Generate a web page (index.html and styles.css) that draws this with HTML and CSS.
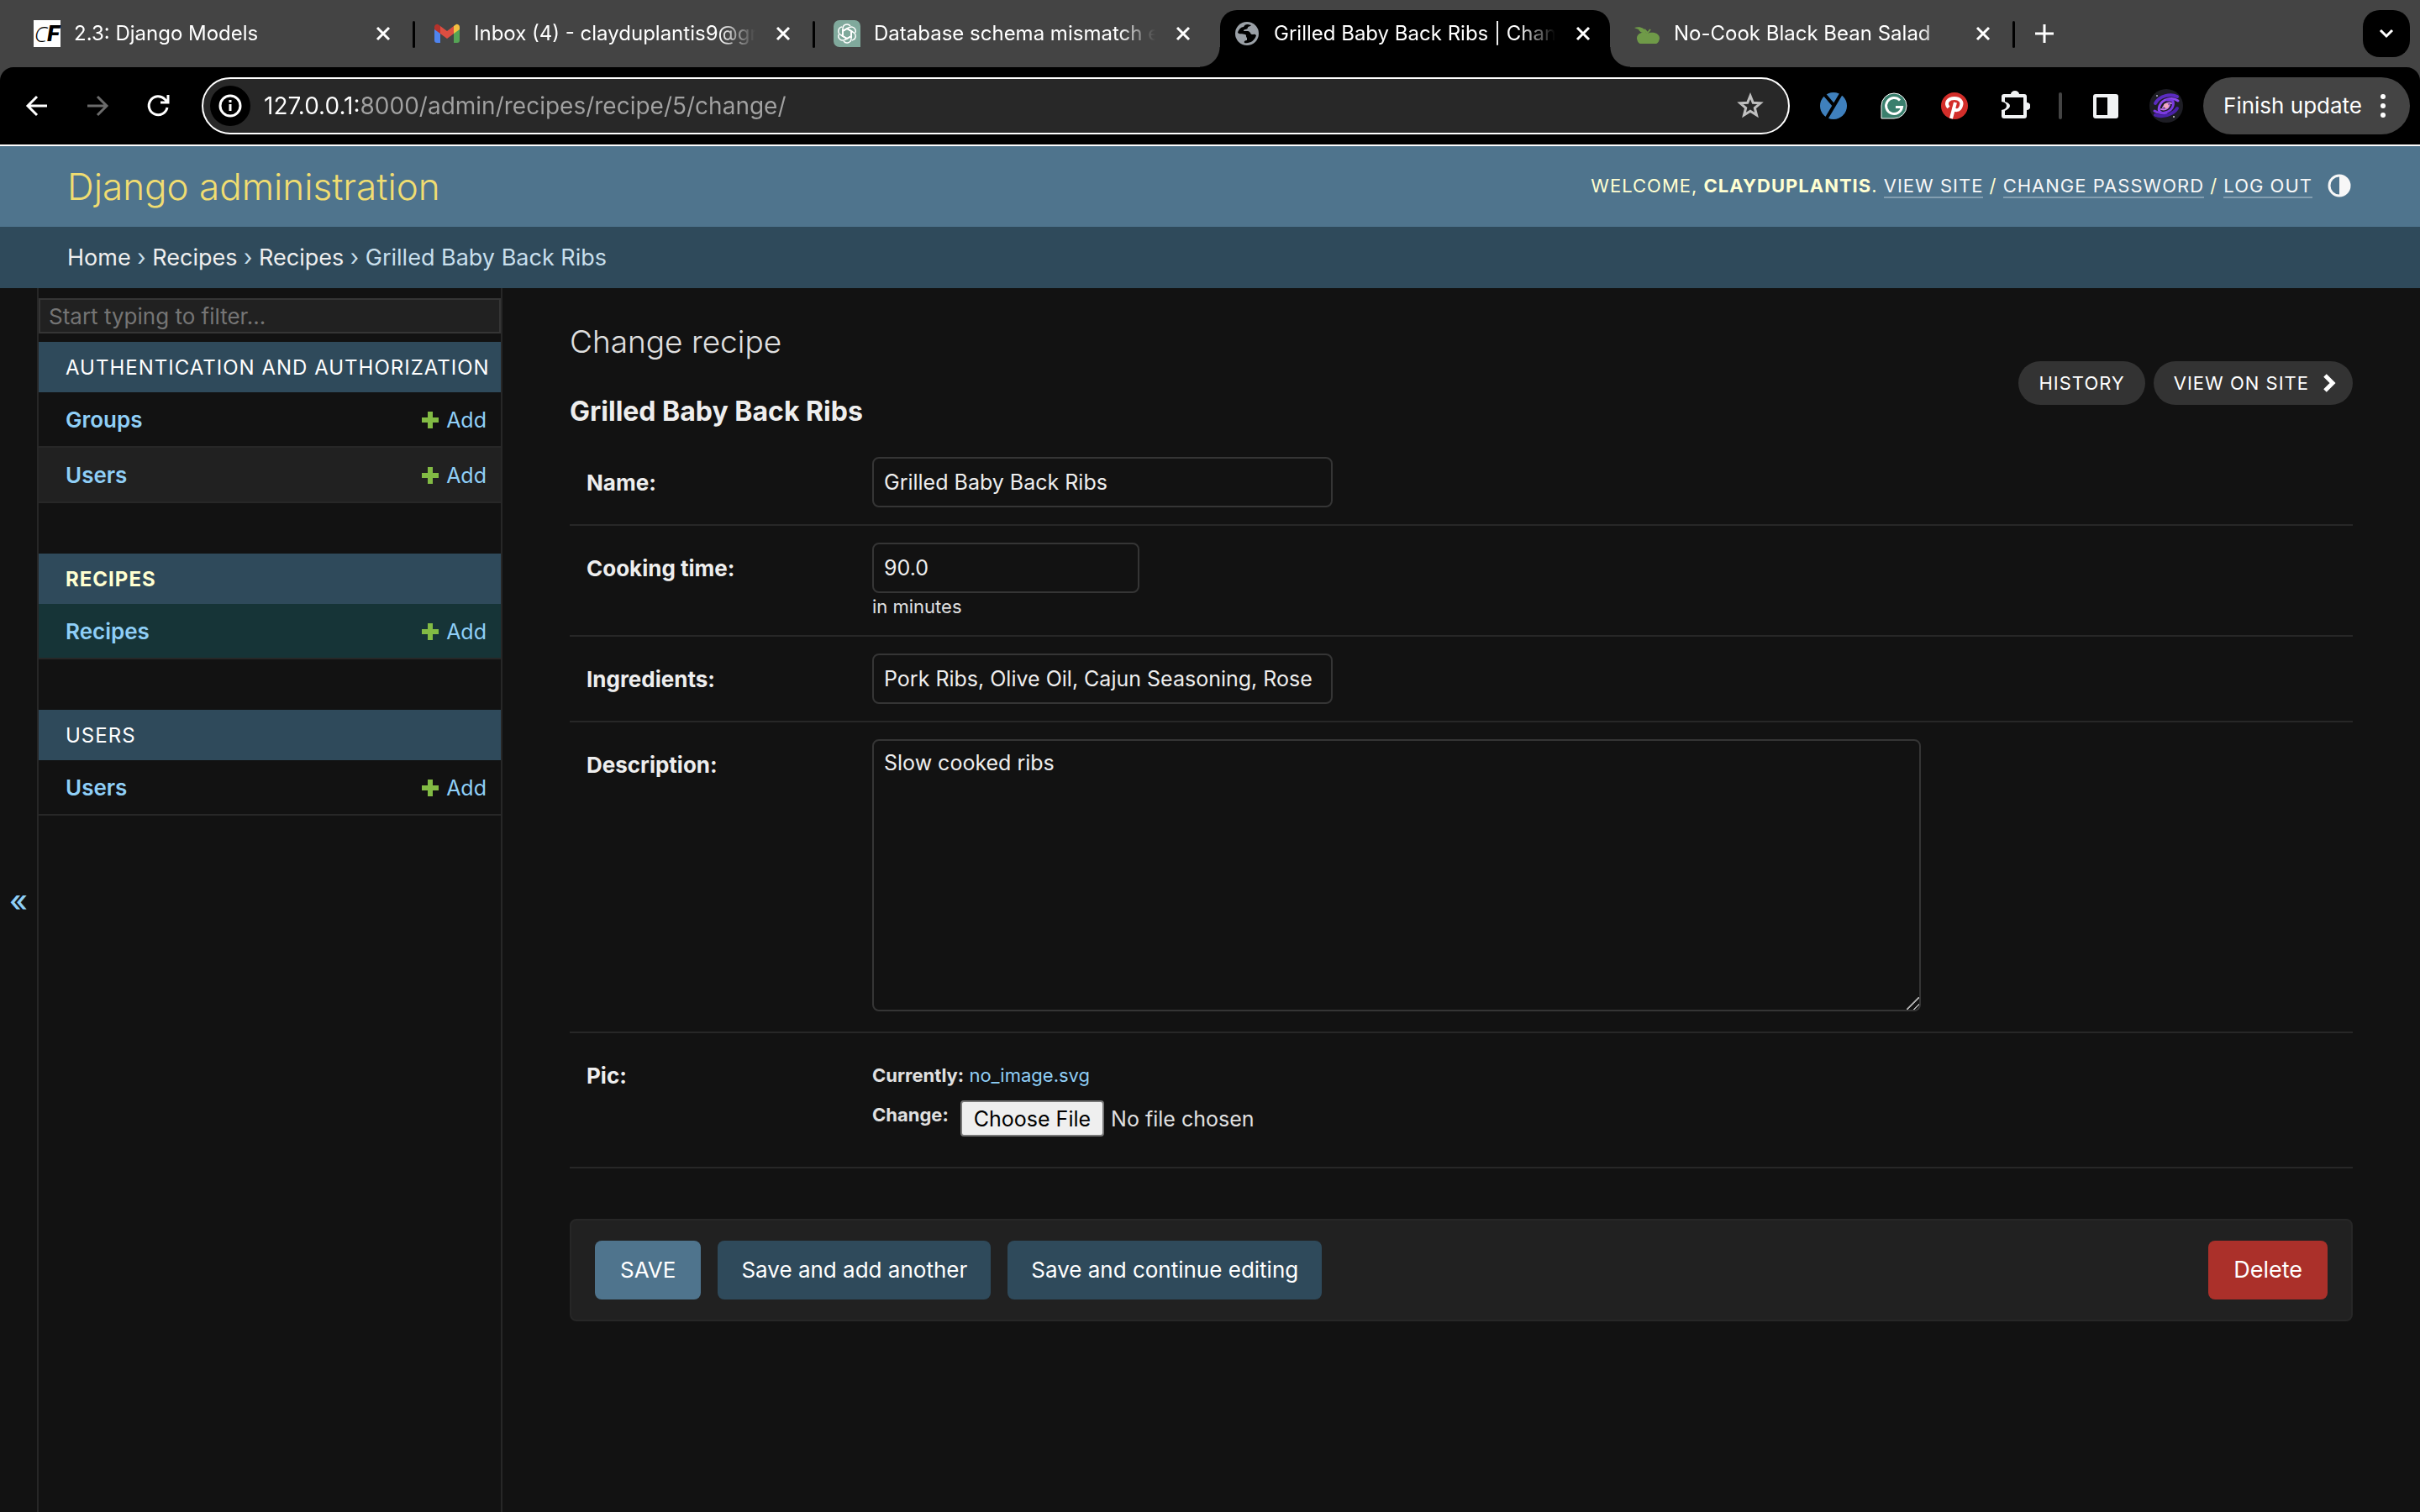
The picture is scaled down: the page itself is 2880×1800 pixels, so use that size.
FILE: index.html
```
<!DOCTYPE html>
<html lang="en">
<head>
<meta charset="utf-8">
<meta name="viewport" content="width=device-width, initial-scale=1">
<title>Grilled Baby Back Ribs | Change recipe | Django site admin</title>
<link rel="stylesheet" href="styles.css">
</head>
<body>
<svg class="sprite" aria-hidden="true">
  <symbol id="close" viewBox="0 0 18 18"><path d="M2 2l14 14M16 2L2 16" fill="none" stroke="#fff" stroke-width="3"/></symbol>
  <symbol id="plus" viewBox="0 0 22 22"><path d="M11 1v20M1 11h20" fill="none" stroke="#82bb44" stroke-width="6"/></symbol>
</svg>

<div class="browser">
  <div class="tabs">
    <div class="tab">
      <span class="favicon favicon-cf"><i>C</i><b>F</b></span>
      <span class="tab-title">2.3: Django Models</span>
      <button class="tab-close" aria-label="Close tab"><svg><use href="#close"/></svg></button>
    </div>
    <div class="tab">
      <svg class="favicon" viewBox="0 0 32 32"><path d="M1 8v16a3 3 0 0 0 3 3h4V13z" fill="#4f84ee"/><path d="M31 8v16a3 3 0 0 1-3 3h-4V13z" fill="#55a455"/><path d="M24 7l2-1.500a3.100 3.100 0 0 1 5 2.500v3l-7 5z" fill="#f3bf41"/><path d="M8 7L6 5.500A3.100 3.100 0 0 0 1 8v3l7 5z" fill="#b4322b"/><path d="M8 7l8 6 8-6v9l-8 6-8-6z" fill="#dc4e41"/></svg>
      <span class="tab-title">Inbox (4) - clayduplantis9@gr</span>
      <button class="tab-close" aria-label="Close tab"><svg><use href="#close"/></svg></button>
    </div>
    <div class="tab tab-before-active">
      <svg class="favicon" viewBox="0 0 32 32"><path d="M7 0h18a7 7 0 0 1 7 7v25H7a7 7 0 0 1-7-7V7a7 7 0 0 1 7-7z" fill="#80a99c"/>
        <g fill="none" stroke="#fff" stroke-width="1.500" stroke-linejoin="round">
          <path id="petal" d="M11 19V10a5 5 0 0 1 9-3M11 13l5-3 7 4"/>
          <use href="#petal" transform="rotate(60 16 16)"/><use href="#petal" transform="rotate(120 16 16)"/><use href="#petal" transform="rotate(180 16 16)"/><use href="#petal" transform="rotate(240 16 16)"/><use href="#petal" transform="rotate(300 16 16)"/>
        </g></svg>
      <span class="tab-title">Database schema mismatch e</span>
      <button class="tab-close" aria-label="Close tab"><svg><use href="#close"/></svg></button>
    </div>
    <div class="tab tab-active">
      <svg class="favicon" viewBox="0 0 32 32"><circle cx="16" cy="16" r="14" fill="#9aa0a6"/><path d="M17 5c-3 0-4 1-5 3-3 0-6 3-7 7 2 2 5 1 9 2 2 1 0 3 2 4v3c-2 0-4 1-3 3 6 1 12-2 14-9-2-2-3-1-5-1s-2-4-5-4h-5c0-3 4-1 5-4 0-2 3-1 4-3z" fill="#000"/></svg>
      <span class="tab-title">Grilled Baby Back Ribs | Chan</span>
      <button class="tab-close" aria-label="Close tab"><svg><use href="#close"/></svg></button>
    </div>
    <div class="tab">
      <svg class="favicon" viewBox="0 0 32 32"><path d="M17 16c3-2 13-2 14 5 0 3-2 7-4 7H8c-2 0-4-4-4-7 1-7 10-7 13-5z" fill="#6f9a48"/><path d="M1 9c6-2 13 0 14 6-6 1-8-2-9-4-2-1-4-1-5-2z" fill="#6f9a48"/><path d="M17 16c-1-2-2-3-4-5M17 15l3-4" fill="none" stroke="#6f9a48" stroke-width="2"/></svg>
      <span class="tab-title">No-Cook Black Bean Salad</span>
      <button class="tab-close" aria-label="Close tab"><svg><use href="#close"/></svg></button>
    </div>
    <button class="new-tab" aria-label="New tab"><svg viewBox="0 0 22 22"><path d="M11 0v22M0 11h22" stroke="#fff" stroke-width="3"/></svg></button>
    <button class="tab-search" aria-label="Search tabs"><svg viewBox="0 0 18 12"><path d="M2 2l7 7 7-7" fill="none" stroke="#fff" stroke-width="3"/></svg></button>
  </div>

  <div class="toolbar">
    <button class="tool" aria-label="Back"><svg viewBox="0 0 32 32"><path d="M28 16H6M16 5L5 16l11 11" fill="none" stroke="#fff" stroke-width="3"/></svg></button>
    <button class="tool" aria-label="Forward"><svg viewBox="0 0 32 32"><path d="M4 16h22M16 5l11 11-11 11" fill="none" stroke="#6b6b6b" stroke-width="3"/></svg></button>
    <button class="tool" aria-label="Reload"><svg viewBox="0 0 32 32"><path d="M27 18a11 11 0 1 1-3-10l3 3M28 3v9h-9" fill="none" stroke="#fff" stroke-width="3"/></svg></button>
    <div class="omnibox">
      <button class="site-info" aria-label="Site information"><svg viewBox="0 0 28 28"><circle cx="14" cy="14" r="12" fill="none" stroke="#fff" stroke-width="3"/><path d="M14 12v8M14 7v3" stroke="#fff" stroke-width="3"/></svg></button>
      <input class="url" type="text" aria-label="Address" value="127.0.0.1:8000/admin/recipes/recipe/5/change/">
      <button class="star" aria-label="Bookmark"><svg viewBox="0 0 34 34"><path d="M17 5l3.300 8.200 8.700.6-6.700 5.700 2.200 8.500-7.500-4.700L9.500 28l2.200-8.500L5 13.800l8.700-.6z" fill="none" stroke="#c0c0c0" stroke-width="3"/></svg></button>
    </div>
    <div class="extensions">
      <button class="tool" aria-label="Extension"><svg viewBox="0 0 32 32"><circle cx="16" cy="16" r="16" fill="#3f80bd"/><path d="M4 1l12 14M26 0L7 32" stroke="#000" stroke-width="4"/></svg></button>
      <button class="tool" aria-label="Grammarly"><svg viewBox="0 0 32 32"><path d="M16 1a15 15 0 0 1 0 30H1V16A15 15 0 0 1 16 1z" fill="#3a7f6d" stroke="#fff" stroke-width="1"/><path d="M23 9.500A9.500 9.500 0 1 0 25.500 17.500H18" fill="none" stroke="#fff" stroke-width="3"/></svg></button>
      <button class="tool" aria-label="Pinterest"><svg viewBox="0 0 32 32"><circle cx="16" cy="16" r="16" fill="#d32e2a"/><path d="M9 18c-5-6 0-11 7-11 6 0 10 4 8 9-2 7-9 6-9 2M17 12l-5 19" fill="none" stroke="#fff" stroke-width="4"/></svg></button>
      <button class="tool" aria-label="Extensions"><svg class="puzzle" viewBox="0 0 36 36"><path d="M2 4h11a5 4 0 0 1 10 0h6q3 0 3 3v7a4 4 0 0 1 0 9v7q0 3-3 3H5q-3 0-3-3v-7q6-1 6-5t-6-5V7q0-3 3-3zM6 8v5q6 2 6 5t-6 6v5h22V8z" fill="#f1f3f4" fill-rule="evenodd"/></svg></button>
      <span class="divider"></span>
      <button class="tool" aria-label="Side panel"><svg viewBox="0 0 32 32"><path d="M4 2h24q3 0 3 3v23q0 3-3 3H4q-3 0-3-3V5q0-3 3-3zM5 6v21h13V6z" fill="#f1f3f4" fill-rule="evenodd"/></svg></button>
      <button class="tool" aria-label="Profile"><svg class="avatar" viewBox="0 0 40 40"><circle cx="20" cy="20" r="20" fill="#1d1d24"/><g fill="none" stroke-linecap="round"><path d="M33 9C25 5 12 8 7 17" stroke="#5a2bc0" stroke-width="4"/><path d="M34 14C27 9 15 12 12 20s3 9 8 9" stroke="#8d49f0" stroke-width="3"/><path d="M7 31c8 3 21 0 26-8" stroke="#4a21a8" stroke-width="4"/><path d="M6 26c7 5 20 2 22-6s-3-7-7-7" stroke="#7a3ae0" stroke-width="3"/><path d="M16 22c2-5 7-6 10-5M24 19c-2 5-6 6-10 5" stroke="#c078ee" stroke-width="2"/></g><circle cx="20" cy="20" r="3" fill="#f2a7c0"/><circle cx="9" cy="8" r="1" fill="#b9b9d0"/><circle cx="29" cy="33" r="1" fill="#d9d9d9"/></svg></button>
    </div>
    <button class="update">Finish update<svg viewBox="0 0 6 28"><circle cx="3" cy="3" r="3" fill="#fff"/><circle cx="3" cy="14" r="3" fill="#fff"/><circle cx="3" cy="25" r="3" fill="#fff"/></svg></button>
  </div>
</div>

<header class="header">
  <a class="site-name" href="#">Django administration</a>
  <div class="user-tools">
    <span>Welcome, <strong>clayduplantis</strong>. <a href="#">View site</a> / <a href="#">Change password</a> / <a href="#">Log out</a></span>
    <button class="theme" aria-label="Toggle theme"><svg viewBox="0 0 28 28"><circle cx="14" cy="14" r="12" fill="none" stroke="#f7f7f7" stroke-width="3"/><path d="M14 2a12 12 0 0 1 0 24z" fill="#f7f7f7"/></svg></button>
  </div>
</header>

<nav class="breadcrumbs" aria-label="Breadcrumbs"><a href="#">Home</a> › <a href="#">Recipes</a> › <a href="#">Recipes</a> › Grilled Baby Back Ribs</nav>

<div class="main">
  <button class="toggle" aria-label="Toggle navigation">«</button>
  <nav class="sidebar" aria-label="Sidebar">
    <input class="filter" type="search" placeholder="Start typing to filter..." aria-label="Filter navigation items">
    <section class="module">
      <h2><a href="#">Authentication and Authorization</a></h2>
      <div class="model"><a class="model-name" href="#">Groups</a><a class="add" href="#"><svg><use href="#plus"/></svg>Add</a></div>
      <div class="model model-alt"><a class="model-name" href="#">Users</a><a class="add" href="#"><svg><use href="#plus"/></svg>Add</a></div>
    </section>
    <section class="module module-current">
      <h2><a href="#">Recipes</a></h2>
      <div class="model model-current"><a class="model-name" href="#">Recipes</a><a class="add" href="#"><svg><use href="#plus"/></svg>Add</a></div>
    </section>
    <section class="module">
      <h2><a href="#">Users</a></h2>
      <div class="model"><a class="model-name" href="#">Users</a><a class="add" href="#"><svg><use href="#plus"/></svg>Add</a></div>
    </section>
  </nav>

  <main class="content">
    <div class="heading">
      <div>
        <h1>Change recipe</h1>
        <h2>Grilled Baby Back Ribs</h2>
      </div>
      <div class="object-tools">
        <a href="#">History</a>
        <a href="#">View on site<svg viewBox="0 0 16 24"><path d="M3 3l9 9-9 9" fill="none" stroke="#fff" stroke-width="5"/></svg></a>
      </div>
    </div>
    <form onsubmit="return false">
      <div class="row"><label for="name">Name:</label><div><input class="field" id="name" type="text" value="Grilled Baby Back Ribs"></div></div>
      <div class="row"><label for="time">Cooking time:</label><div><input class="field field-number" id="time" type="number" step="any" value="90.0"><p class="help">in minutes</p></div></div>
      <div class="row"><label for="ingredients">Ingredients:</label><div><input class="field" id="ingredients" type="text" value="Pork Ribs, Olive Oil, Cajun Seasoning, Rose"></div></div>
      <div class="row row-text"><label for="description">Description:</label><div><textarea class="field field-area" id="description">Slow cooked ribs</textarea></div></div>
      <div class="row"><label for="pic">Pic:</label>
        <div class="upload">
          <p><b>Currently:</b> <a href="#">no_image.svg</a></p>
          <div class="change"><label for="pic">Change:</label><input id="pic" type="file"></div>
        </div>
      </div>
      <div class="submit-row">
        <button class="btn btn-primary">SAVE</button>
        <button class="btn">Save and add another</button>
        <button class="btn">Save and continue editing</button>
        <a class="btn btn-delete" href="#">Delete</a>
      </div>
    </form>
  </main>
</div>
</body>
</html>
```
FILE: styles.css
```
* { box-sizing: border-box; }

body {
  margin: 0;
  min-height: 100vh;
  display: flex;
  flex-direction: column;
  background: #121212;
  color: #eee;
  font: 26px/32px Inter, "Noto Sans", sans-serif;
}

a { color: #8fcff7; text-decoration: none; }
button, input, textarea { font: inherit; color: inherit; }
button { border: 0; padding: 0; background: none; display: flex; align-items: center; justify-content: center; cursor: pointer; }
h1, h2, p { margin: 0; }
svg { display: block; flex: none; }
.sprite { width: 0; height: 0; position: absolute; }

/* Browser window */
.browser { background: #444; border-bottom: 2px solid #fff; }

.tabs { display: flex; height: 80px; padding: 0 12px 0 18px; align-items: stretch; }
.tab {
  flex: 0 1 476px;
  min-width: 0;
  display: flex;
  align-items: center;
  padding: 0 29px 0 22px;
  position: relative;
  color: #fff;
  font-size: 24px;
}
.tab::after {
  content: "";
  position: absolute;
  right: 0;
  top: 25px;
  width: 3px;
  height: 32px;
  border-radius: 2px;
  background: #000;
}
.tab-before-active::after { display: none; }
.tab-active { background: #000; margin: 12px 6px 0; padding: 0 23px 12px 16px; flex-basis: 464px; border-radius: 20px 20px 0 0; }
.tab-active::before, .tab-active::after {
  content: "";
  position: absolute;
  top: auto;
  bottom: 0;
  width: 24px;
  height: 24px;
  border-radius: 0;
}
.tab-active::before { left: -24px; background: radial-gradient(circle at 0 0, transparent 23px, #000 24px); }
.tab-active::after { right: -24px; background: radial-gradient(circle at 100% 0, transparent 23px, #000 24px); }

.favicon { flex: none; width: 32px; height: 32px; }
.favicon-cf { background: #fff; color: #000; display: flex; justify-content: center; line-height: 32px; font-size: 26px; font-style: italic; }
.favicon-cf i { font-weight: 300; font-family: "Open Sans", sans-serif; }
.favicon-cf b { font-weight: 800; }
.tab-title {
  flex: 1;
  min-width: 0;
  margin: 0 16px 0 16px;
  overflow: hidden;
  white-space: nowrap;
  -webkit-mask-image: linear-gradient(270deg, transparent 8px, #000 52px);
  mask-image: linear-gradient(270deg, transparent 8px, #000 52px);
}
.tab-close svg { width: 18px; height: 18px; }
.new-tab { width: 70px; }
.new-tab svg { width: 22px; }
.tab-search { margin: 12px 0 12px auto; width: 56px; border-radius: 20px; background: #000; }
.tab-search svg { width: 18px; }

.toolbar { display: flex; align-items: center; padding: 12px 12px 12px 8px; background: #000; border-radius: 16px 16px 0 0; }
.tool { width: 72px; height: 68px; }
.tool svg { width: 32px; height: 32px; }
.tool .puzzle { width: 36px; height: 36px; }
.tool .avatar { width: 40px; height: 40px; }
.omnibox {
  flex: 1;
  min-width: 0;
  display: flex;
  align-items: center;
  height: 68px;
  margin: 0 16px;
  padding: 0 28px 0 8px;
  background: #282828;
  border: 2px solid #fff;
  border-radius: 34px;
}
.site-info { flex: none; width: 48px; height: 48px; border-radius: 50%; background: #000; }
.site-info svg { width: 28px; }
.url {
  flex: 1;
  min-width: 0;
  border: 0;
  outline: 0;
  padding: 0;
  margin-left: 16px;
  font-size: 28px;
  color: transparent;
  background: linear-gradient(90deg, #fff 114px, #a2a2a2 114px);
  -webkit-background-clip: text;
  background-clip: text;
}
.star svg { width: 34px; }
.extensions { display: flex; align-items: center; }
.divider { width: 4px; height: 32px; margin: 0 16px; border-radius: 2px; background: #444; }
.update { height: 68px; margin-left: 8px; padding: 0 29px 0 24px; gap: 22px; border-radius: 34px; background: #444; color: #fff; white-space: nowrap; }
.update svg { width: 6px; }

/* Site header */
.header { display: flex; align-items: center; justify-content: space-between; height: 96px; padding: 0 82px 0 80px; background: #4f748d; color: #ffffd1; }
.site-name { color: #f0dd71; font-size: 44px; font-weight: 350; }
.user-tools { display: flex; align-items: center; gap: 18px; padding-bottom: 3px; font-size: 22px; letter-spacing: 1px; text-transform: uppercase; }
.user-tools a { color: #f7f7f7; border-bottom: 2px solid #839eb0; }
.theme svg { width: 28px; }

.breadcrumbs { padding: 21px 80px 20px; background: #2f4a5b; color: #c8dfec; font-size: 27px; }
.breadcrumbs a { color: #eee; }

.main { flex: 1; display: flex; }

/* Navigation sidebar */
.toggle { flex: none; width: 46px; border-right: 2px solid #272727; color: #8fcff7; font-size: 36px; font-weight: 500; }
.sidebar { flex: none; width: 552px; padding-top: 12px; border-right: 2px solid #272727; }
.filter { display: block; width: 100%; height: 42px; padding: 0 10px; border: 2px solid #353535; border-radius: 0; background: #212121; outline: 0; -webkit-appearance: none; appearance: none; }
.filter::placeholder { color: #757575; }
.module { margin: 10px 0 60px; }
.module + .module { margin-top: 0; }
.module h2 { padding: 2px 16px 0 32px; background: #2f4a5b; font-size: 24px; font-weight: 400; line-height: 58px; letter-spacing: 1px; text-transform: uppercase; white-space: nowrap; }
.module h2 a { color: #fff; }
.module-current h2 { font-weight: 700; }
.module-current h2 a { color: #ffffd1; }
.model { display: flex; align-items: center; justify-content: space-between; height: 66px; padding: 2px 17px 0 32px; border-bottom: 2px solid #272727; }
.model-alt { background: #212121; }
.model-current { background: #163437; }
.model-name { font-weight: 600; }
.add { display: flex; align-items: center; gap: 8px; font-size: 25px; }
.add svg { width: 22px; height: 22px; }

/* Change form */
.content { flex: 1; min-width: 0; padding: 40px 80px; }
.heading { display: flex; justify-content: space-between; align-items: flex-end; }
.heading h1 { font-size: 37px; line-height: 48px; font-weight: 350; color: #e0e0e0; }
.heading h2 { margin: 40px 0 15px; font-size: 32px; line-height: 38px; font-weight: 700; }
.object-tools { display: flex; gap: 10px; margin-bottom: 42px; }
.object-tools a { display: flex; align-items: center; gap: 16px; height: 52px; padding: 0 24px; border-radius: 26px; background: #333; color: #fff; font-size: 22px; letter-spacing: 1px; text-transform: uppercase; }
.object-tools a + a { padding-right: 20px; }
.object-tools svg { width: 16px; }

.row { display: flex; padding: 20px; border-bottom: 2px solid #272727; }
.row > label { flex: none; width: 340px; padding-top: 2px; font-weight: 700; line-height: 58px; }
.row-text { padding-bottom: 24px; }
.field { display: block; width: 548px; height: 60px; padding: 0 12px; border: 2px solid #353535; border-radius: 8px; background: #121212; font-size: 25px; outline: 0; }
.field-number { width: 318px; }
.field-area { width: 1248px; max-width: 100%; height: 324px; padding: 10px 12px; resize: both; }
.field-area::-webkit-resizer { background: linear-gradient(135deg, transparent 46%, #b0b0b0 47%, #b0b0b0 54%, transparent 55%, transparent 74%, #b0b0b0 75%, #b0b0b0 82%, transparent 83%); }
.help { padding-top: 2px; font-size: 22px; line-height: 28px; color: #e0e0e0; }
.upload { padding-bottom: 16px; font-size: 22px; line-height: 60px; color: #e0e0e0; }
.change { display: flex; gap: 14px; }
.change label { font-weight: 700; line-height: 34px; }
.change input { height: 43px; font-size: 25px; line-height: 30px; }
.change input::file-selector-button { height: 43px; margin: 0 8px 0 0; padding: 0 14px; border: 2px solid #767676; border-radius: 4px; background: #efefef; color: #000; font: inherit; }

.submit-row { display: flex; gap: 20px; margin-top: 60px; padding: 24px 28px; background: #212121; border: 2px solid #272727; border-radius: 8px; }
.btn { display: block; height: 70px; padding: 0 28px; border-radius: 8px; background: #2f4a5b; color: #fff; line-height: 70px; }
.btn-primary { padding: 0 30px; background: #4f748d; }
.btn-delete { margin-left: auto; padding: 0 30px; background: #ab302a; font-size: 27px; }
```
